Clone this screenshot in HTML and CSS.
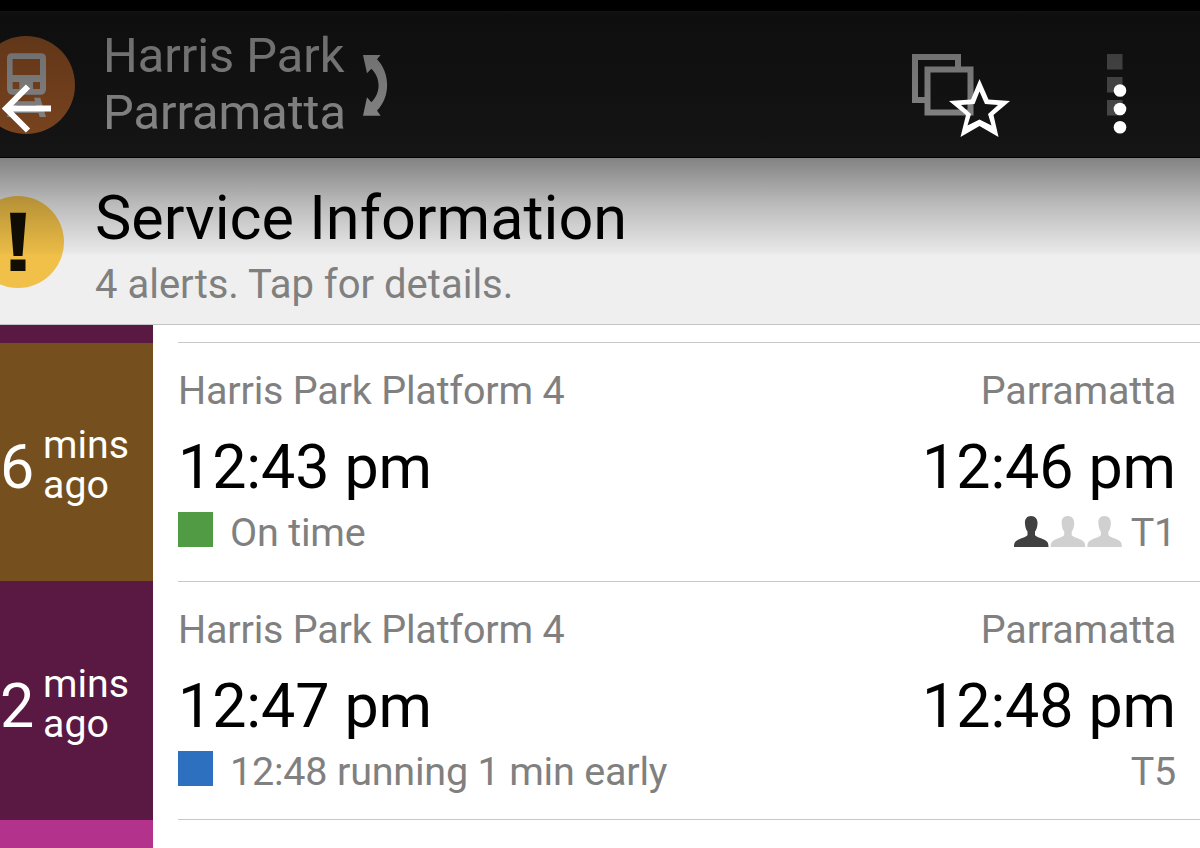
FILE: index.html
```html
<!DOCTYPE html>
<html lang="en">
<head>
  <meta charset="UTF-8">
  <meta name="viewport" content="width=device-width, initial-scale=1.0">
  <title>Harris Park - Parramatta</title>
  <link rel="stylesheet" href="styles.css">
</head>
<body>
  <div class="screen">
    <header class="trip-bar">
      <svg class="train-icon" width="75" height="98" viewBox="0 0 75 98">
        <circle cx="26" cy="49" r="49" fill="#e6803a"/>
        <path fill="#fff" fill-rule="evenodd" d="M12 17.300h29q5 0 5 5v30.500q0 6-6 6H13q-6 0-6-6V22.300q0-5 5-5zM12.600 23v16H40V23zM12.600 46v7h6.700v-7zM33 46v7h7v-7z"/>
        <path fill="#fff" d="M34 61.700h6.300L46 81h-6.300l-1.200-4H14.500l-1.200 4H7l5.700-19.300H19L17.900 65.300h17.200zM16.900 69l-1.200 4.200h21.600L36.100 69z" fill-rule="evenodd"/>
      </svg>
      <div class="trip-names">
        <div>Harris Park</div>
        <div>Parramatta</div>
      </div>
      <svg class="swap-icon" width="26" height="62" viewBox="0 0 26 62">
        <path fill="#fff" d="M1 1h17.600L15 5.300C28.500 19 28.500 43 15 56.500l3.600 5.200H1l4-18.400 4.300 5C19 39 19 24 9.300 14.700L5 19.300z"/>
      </svg>
      <svg class="copy-icon" width="62" height="62" viewBox="0 0 62 62">
        <path fill="none" stroke="#fff" stroke-width="6" d="M46 13V3H3v43h10M15.500 15.500h43v43h-43z"/>
      </svg>
      <svg class="menu-icon" width="16" height="62" viewBox="0 0 16 62">
        <path fill="#8c8c8c" d="M0 0h15.500v15.500H0zM0 23h15.500v15.500H0zM0 46h15.500v15.500H0z"/>
      </svg>
    </header>

    <section class="alerts">
      <svg class="alert-icon" width="64" height="92" viewBox="0 0 64 92">
        <circle cx="18" cy="46" r="46" fill="#f0c048"/>
        <path fill="#120e04" d="M10 16.700h16L22.500 60h-9zM10.500 63.500h15V75h-15z"/>
      </svg>
      <div class="alert-text">
        <div class="alert-title">Service Information</div>
        <div class="alert-sub">4 alerts. Tap for details.</div>
      </div>
    </section>

    <main class="departures">
      <div class="row row-prev">
        <div class="eta purple"></div>
      </div>

      <div class="row">
        <div class="eta brown">
          <span class="eta-num">6</span>
          <span class="eta-unit">mins<br>ago</span>
        </div>
        <div class="details">
          <div class="line small"><span>Harris Park Platform 4</span><span>Parramatta</span></div>
          <div class="line time"><span>12:43 pm</span><span>12:46 pm</span></div>
          <div class="line small">
            <span class="status"><i class="square green"></i>On time</span>
            <span class="route">
              <svg class="people" width="108" height="31" viewBox="0 0 108 31">
                <defs>
                  <path id="person" d="M17 0c-4.500 0-6.500 3.500-6 8 .3 3.500 1.200 6 2.500 7.500V19c-1 2-6 3-9.500 4.800C1 25.500 0 27 0 31h34.500c0-4-1-5.500-4-7.200C27 22 22 21 21 19v-3.500c1.300-1.500 2.200-4 2.500-7.500.4-4.500-2-8-6.500-8z"/>
                </defs>
                <use href="#person" fill="#404040"/>
                <use href="#person" x="36.700" fill="#d0d0d0"/>
                <use href="#person" x="73.400" fill="#d0d0d0"/>
              </svg>
              <span>T1</span>
            </span>
          </div>
        </div>
      </div>

      <div class="row row-second">
        <div class="eta purple">
          <span class="eta-num">2</span>
          <span class="eta-unit">mins<br>ago</span>
        </div>
        <div class="details">
          <div class="line small"><span>Harris Park Platform 4</span><span>Parramatta</span></div>
          <div class="line time"><span>12:47 pm</span><span>12:48 pm</span></div>
          <div class="line small">
            <span class="status"><i class="square blue"></i>12:48 running 1 min early</span>
            <span>T5</span>
          </div>
        </div>
      </div>

      <div class="row row-next">
        <div class="eta pink"></div>
        <div class="details"></div>
      </div>
    </main>

    <!-- dark gradient and white toolbar lying over the page -->
    <div class="shade"></div>
    <svg class="toolbar-icon back" width="49" height="50" viewBox="0 0 49 50">
      <path fill="none" stroke="#fff" stroke-width="6" d="M26 2.500L4 24.500l22 22M4 24.500h45"/>
    </svg>
    <svg class="toolbar-icon star" width="62" height="60" viewBox="0 0 62 60">
      <path fill="#fff" fill-rule="evenodd" d="M30.500 0L39.500 20.500L61 22L44.500 36L49.500 58L30.500 47L11.500 58L17 36L0 22L22 20.500zM30.500 12.500L25.500 25L12 26L22 35L18.500 46.500L30.500 40.500L42.500 46.500L39 35L49 26L36 25z"/>
    </svg>
    <svg class="toolbar-icon dots" width="14" height="50" viewBox="0 0 14 50">
      <g fill="#fff">
        <circle cx="7" cy="6.500" r="6.300"/>
        <circle cx="7" cy="25" r="6.300"/>
        <circle cx="7" cy="43.300" r="6.300"/>
      </g>
    </svg>
  </div>
</body>
</html>
```

FILE: styles.css
```css
* {
  box-sizing: border-box;
}

body {
  margin: 0;
  font-family: Roboto, sans-serif;
  background-color: #fff;
}

.screen {
  position: relative;
  width: 1200px;
  height: 848px;
  overflow: hidden;
}

svg {
  display: block;
  flex-shrink: 0;
}

/* Header */
.trip-bar {
  display: flex;
  align-items: flex-start;
  height: 158px;
  padding-top: 16px;
  border-top: 11px solid #000;
  border-bottom: 1px solid #000;
  background: linear-gradient(#2c2c2c, #232323 4px, #262626);
}

.train-icon {
  margin-top: 9px;
}

.trip-names {
  width: 242px;
  margin-left: 28px;
  color: #fff;
  font-size: 48.7px;
  line-height: 57px;
  white-space: nowrap;
}

.swap-icon {
  margin: 27px 0 0 17px;
}

.copy-icon {
  margin: 27px 0 0 auto;
}

.menu-icon {
  margin: 27px 77px 0 133px;
}

/* Service information */
.alerts {
  display: flex;
  height: 167px;
  padding-top: 24px;
  background-color: #efefef;
  border-bottom: 1px solid #c4c4c4;
}

.alert-icon {
  margin-top: 14px;
}

.alert-text {
  margin-left: 31px;
}

.alert-title {
  font-size: 61.2px;
  line-height: 72px;
  color: #000;
}

.alert-sub {
  margin-top: 7px;
  font-size: 40px;
  line-height: 48px;
  color: #808080;
}

/* Departures */
.row {
  display: flex;
  height: 239px;
}

.row-prev {
  height: 17px;
}

.row-second {
  height: 238px;
}

.row-next {
  height: 29px;
}

.eta {
  display: flex;
  align-items: center;
  width: 153px;
  margin-top: 1px;
  padding-top: 5px;
  color: #fff;
}

.row-prev .eta {
  margin-top: 0;
  margin-bottom: -1px;
}

.row-second .eta {
  margin-top: 0;
  margin-bottom: -1px;
  padding-top: 6px;
}

.eta-num {
  width: 43px;
  margin-top: 4px;
  font-size: 61px;
  letter-spacing: -1px;
  line-height: 72px;
}

.eta-unit {
  font-size: 39.3px;
  line-height: 40px;
}

.purple {
  background-color: #5a1942;
}

.brown {
  background-color: #75501e;
}

.pink {
  background-color: #b3328c;
}

.details {
  flex: 1;
  margin-left: 25px;
  padding: 24px 24px 0 0;
  border-top: 1px solid #c8c8c8;
}

.line {
  display: flex;
  justify-content: space-between;
  white-space: nowrap;
}

.small {
  font-size: 39.5px;
  letter-spacing: -0.2px;
  line-height: 48px;
  color: #808080;
}

.time {
  margin: 16px 0 6px;
  font-size: 61px;
  letter-spacing: -0.1px;
  line-height: 72px;
  color: #000;
}

.status {
  display: flex;
}

.square {
  width: 35px;
  height: 35px;
  margin: 3px 17px 0 0;
}

.green {
  background-color: #529b45;
}

.blue {
  background-color: #2e70c0;
}

.route {
  display: flex;
}

.people {
  margin: 7px 9px 0 0;
}

/* Overlay */
.shade {
  position: absolute;
  top: 0;
  left: 0;
  width: 100%;
  height: 255px;
  background: linear-gradient(rgba(0, 0, 0, 0.61), rgba(0, 0, 0, 0.455) 158px, rgba(0, 0, 0, 0.22) 204px, rgba(0, 0, 0, 0.03) 252px, transparent);
}

.toolbar-icon {
  position: absolute;
}

.back {
  top: 84px;
  left: 2px;
}

.star {
  top: 79px;
  left: 949px;
}

.dots {
  top: 84px;
  left: 1113px;
}
```
